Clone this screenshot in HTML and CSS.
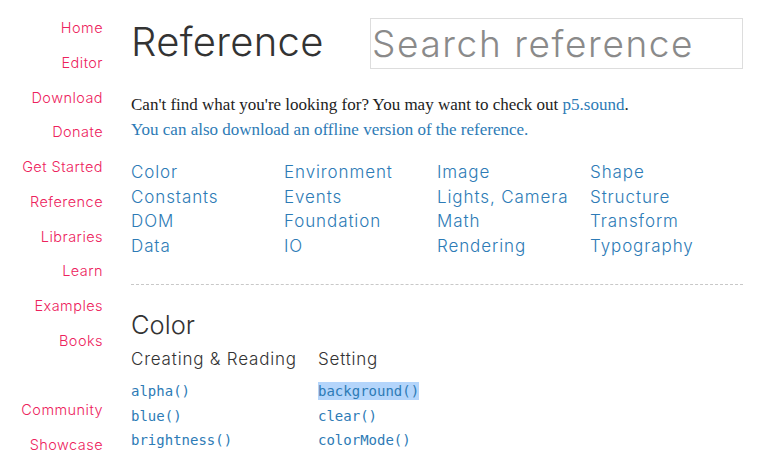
FILE: index.html
```html
<!DOCTYPE html>
<html>
<head>
<meta charset="utf-8">
<link rel="stylesheet" href="styles.css">
</head>
<body>
<div class="page">
  <nav class="side">
    <a href="#">Home</a>
    <a href="#">Editor</a>
    <a href="#">Download</a>
    <a href="#">Donate</a>
    <a href="#">Get Started</a>
    <a href="#">Reference</a>
    <a href="#">Libraries</a>
    <a href="#">Learn</a>
    <a href="#">Examples</a>
    <a href="#">Books</a>
    <span class="spacer"></span>
    <a href="#">Community</a>
    <a href="#">Showcase</a>
  </nav>
  <main class="main">
    <div class="top">
      <h1 class="title">Reference</h1>
      <input class="search" type="text" placeholder="Search reference">
    </div>
    <p class="intro">Can't find what you're looking for? You may want to check out <a href="#">p5.sound</a>.<br><a href="#">You can also download an offline version of the reference.</a></p>
    <div class="cats">
      <a href="#">Color</a><a href="#">Environment</a><a href="#">Image</a><a href="#">Shape</a>
      <a href="#">Constants</a><a href="#">Events</a><a href="#">Lights, Camera</a><a href="#">Structure</a>
      <a href="#">DOM</a><a href="#">Foundation</a><a href="#">Math</a><a href="#">Transform</a>
      <a href="#">Data</a><a href="#">IO</a><a href="#">Rendering</a><a href="#">Typography</a>
    </div>
    <hr class="rule">
    <h2 class="sec">Color</h2>
    <div class="groups">
      <div class="group g1">
        <h3>Creating &amp; Reading</h3>
        <a href="#">alpha()</a>
        <a href="#">blue()</a>
        <a href="#">brightness()</a>
      </div>
      <div class="group">
        <h3>Setting</h3>
        <a href="#"><span class="sel">background()</span></a>
        <a href="#">clear()</a>
        <a href="#">colorMode()</a>
      </div>
    </div>
  </main>
</div>
</body>
</html>
```
FILE: styles.css
```css
html, body { margin: 0; padding: 0; background: #fff; }
body { font-family: "Inter", "Liberation Sans", sans-serif; color: #333; overflow: hidden; }
a { text-decoration: none; }
.page { display: flex; align-items: flex-start; }
.side {
  width: 103px;
  display: flex;
  flex-direction: column;
  align-items: flex-end;
  padding-top: 11px;
  flex-shrink: 0;
}
.side a, .side .spacer {
  display: block;
  height: 34.75px;
  line-height: 34.75px;
  font-size: 14.5px;
  font-weight: 350;
  letter-spacing: 0.45px;
  color: #ED225D;
  white-space: nowrap;
}
.main { margin-left: 28px; width: 612px; }
.top { display: flex; align-items: flex-start; padding-top: 18px; }
.title {
  margin: 0;
  width: 239px;
  font-size: 40px;
  font-weight: 350;
  letter-spacing: 0.3px;
  line-height: 48px;
  color: #333;
}
.search {
  box-sizing: border-box;
  width: 373px;
  height: 51px;
  border: 1px solid #ddd;
  padding: 0 1px;
  margin: 0;
  font-family: "Inter", "Liberation Sans", sans-serif;
  font-size: 37px;
  font-weight: 300;
  letter-spacing: 1.6px;
  color: #777;
  outline: none;
}
.search::placeholder { color: #8a8a8a; }
.intro {
  margin: 24px 0 0;
  font-family: "Liberation Serif", serif;
  font-size: 17px;
  line-height: 24.5px;
  color: #222;
}
.intro a { color: #2D7BB6; }
.cats {
  margin-top: 18px;
  display: grid;
  grid-template-columns: repeat(4, 153px);
}
.cats a {
  font-size: 17px;
  font-weight: 350;
  letter-spacing: 0.9px;
  line-height: 24.6px;
  color: #2D7BB6;
  white-space: nowrap;
}
.rule {
  margin: 26px 0 0;
  border: 0;
  border-top: 1px dashed #c8c8c8;
  height: 0;
}
.sec {
  margin: 25px 0 0;
  font-size: 25.5px;
  font-weight: 350;
  line-height: 30px;
  color: #333;
}
.groups { display: flex; margin-top: 7px; }
.group { display: flex; flex-direction: column; }
.g1 { width: 187px; }
.group h3 {
  margin: 0 0 8px;
  font-size: 17px;
  font-weight: 350;
  letter-spacing: 0.8px;
  line-height: 24px;
  color: #333;
  white-space: nowrap;
}
.group a {
  font-family: "DejaVu Sans Mono", monospace;
  font-size: 14px;
  line-height: 24.5px;
  color: #2D7BB6;
}
.sel { background: #b4d5fb; padding: 1px 0; }
```
